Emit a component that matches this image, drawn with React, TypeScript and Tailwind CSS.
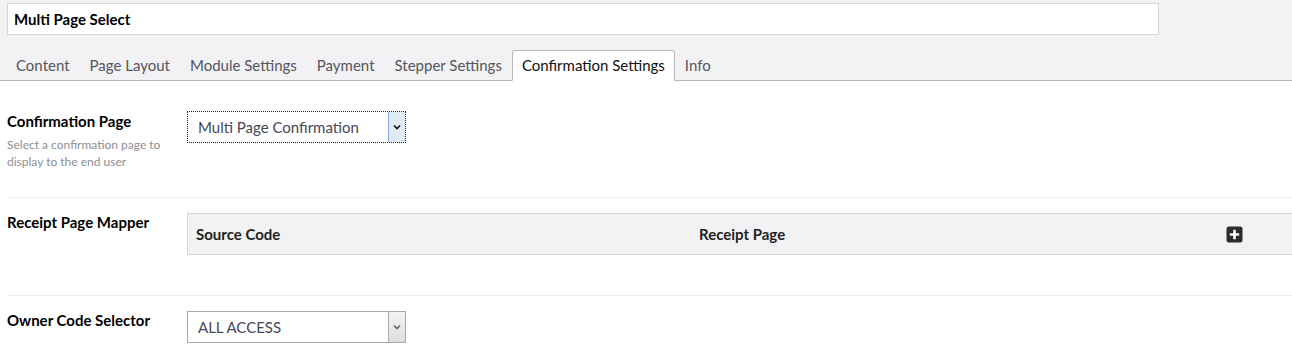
import { useState } from 'react'

const TABS = [
  'Content',
  'Page Layout',
  'Module Settings',
  'Payment',
  'Stepper Settings',
  'Confirmation Settings',
  'Info',
]

function Chevron({ color }: { color: string }) {
  return (
    <svg width="8" height="6" viewBox="0 0 8 6">
      <path d="M1 1.5 L4 4.5 L7 1.5" fill="none" stroke={color} strokeWidth="1.6" />
    </svg>
  )
}

function FakeSelect({ value, focused }: { value: string; focused?: boolean }) {
  return (
    <div
      className={
        focused
          ? 'w-[219px] h-[32px] flex bg-white border border-dotted border-[#222]'
          : 'w-[219px] h-[32px] flex bg-white border border-[#a9a9a9]'
      }
    >
      <div className="flex-1 flex items-center pl-[10px] text-[15px] text-[#474756]">{value}</div>
      <div
        className={
          focused
            ? 'w-[17px] flex items-center justify-center bg-[#dfeaf7] border-l border-[#8aa8cf]'
            : 'w-[17px] flex items-center justify-center bg-gradient-to-b from-[#f4f4f4] to-[#dedede] border-l border-[#a9a9a9]'
        }
      >
        <Chevron color={focused ? '#111' : '#666'} />
      </div>
    </div>
  )
}

function PlusSquare() {
  return (
    <svg width="17" height="17" viewBox="0 0 17 17">
      <rect x="0.5" y="0.5" width="16" height="16" rx="2.5" fill="#2b2b2e" />
      <path d="M8.5 3.8 V13.2 M3.8 8.5 H13.2" stroke="#fff" strokeWidth="2.6" />
    </svg>
  )
}

export default function App() {
  const [active, setActive] = useState('Confirmation Settings')

  return (
    <div className="w-full min-h-screen bg-white text-[#1d1d1d]" style={{ fontFamily: 'Lato, "Open Sans", sans-serif' }}>
      {/* Header with title + tabs */}
      <div className="bg-[#f2f2f4] pt-[3px] border-b border-[#b7b5be]">
        <div className="ml-[7px] w-[1152px] h-[32px] bg-white border border-[#d6d6d9] flex items-center pl-[6px] text-[15px] font-bold text-black">
          Multi Page Select
        </div>
        <div className="flex mt-[15px] pl-[6px] h-[30px]">
          {TABS.map((t) => (
            <button
              key={t}
              onClick={() => setActive(t)}
              className={
                t === active
                  ? 'h-[31px] -mb-px px-[9px] border border-[#b7b5be] border-b-white bg-white rounded-t-[3px] text-[15px] text-[#111]'
                  : 'h-[31px] -mb-px px-[9px] border border-transparent text-[15px] text-[#55555f]'
              }
            >
              {t}
            </button>
          ))}
        </div>
      </div>

      <div className="pl-[7px]">
        {/* Confirmation Page */}
        <div className="flex pt-[30px] pb-[27px]">
          <div className="w-[180px]">
            <div className="text-[15px] leading-[20px] font-bold text-black">Confirmation Page</div>
            <div className="mt-[5px] text-[12px] leading-[17px] text-[#8e8e94]">
              Select a confirmation page to
              <br />
              display to the end user
            </div>
          </div>
          <FakeSelect value="Multi Page Confirmation" focused />
        </div>

        {/* Receipt Page Mapper */}
        <div className="flex border-t border-[#ececee] pt-[15px] pb-[40px]">
          <div className="w-[180px] -mt-px text-[15px] leading-[20px] font-bold text-black">Receipt Page Mapper</div>
          <div className="flex-1 h-[42px] flex items-center bg-[#f2f2f4] border-y border-l border-[#d6d6d8] text-[15px] font-bold text-[#222]">
            <div className="w-[503px] pl-[8px]">Source Code</div>
            <div className="w-[503px] pl-[8px]">Receipt Page</div>
            <div className="pl-[32px] flex items-center">
              <PlusSquare />
            </div>
          </div>
        </div>

        {/* Owner Code Selector */}
        <div className="flex border-t border-[#ececee] pt-[15px] pb-[16px]">
          <div className="w-[180px] -mt-px text-[15px] leading-[20px] font-bold text-black">Owner Code Selector</div>
          <FakeSelect value="ALL ACCESS" />
        </div>
      </div>
    </div>
  )
}
